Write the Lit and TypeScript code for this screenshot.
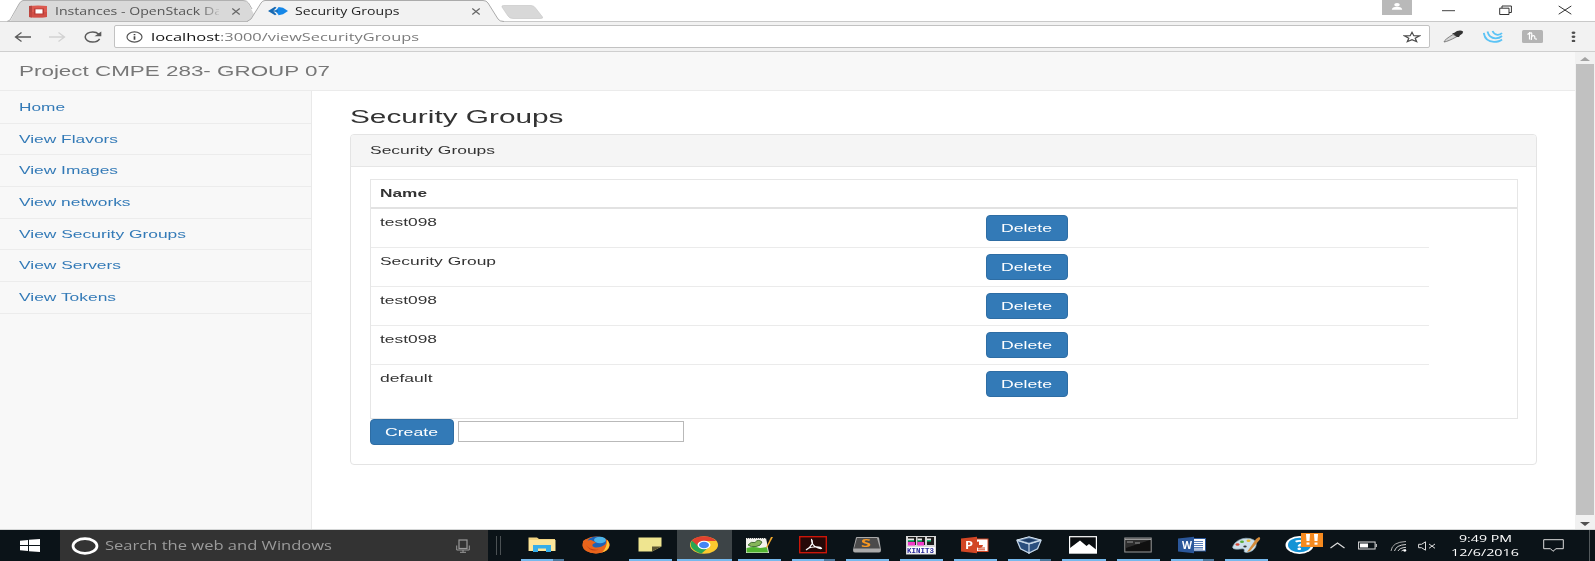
import { LitElement, html, css, svg } from "lit";
import { customElement, property } from "lit/decorators.js";

/* Single line of text stretched horizontally to a fixed measure. */
@customElement("wide-text")
class WideText extends LitElement {
  @property({ type: Number }) w = 100;
  static styles = css`
    :host { display: inline-block; white-space: nowrap; flex: none; text-align: left; }
    .run { display: inline-block; transform-origin: 0 50%; }
  `;
  render() {
    return html`<span class="run"><slot></slot></span>`;
  }
  updated() {
    const run = this.renderRoot.querySelector(".run") as HTMLElement;
    this.style.width = this.w + "px";
    run.style.transform = "none";
    const natural = run.getBoundingClientRect().width;
    if (natural) run.style.transform = `scaleX(${this.w / natural})`;
  }
}

const icon = (cls: string, w: number, h: number, body: unknown) =>
  html`<svg class=${cls} width=${w} height=${h} viewBox="0 0 ${w} ${h}" fill="none">${body}</svg>`;

@customElement("browser-chrome")
class BrowserChrome extends LitElement {
  static styles = css`
    :host { display: block; font-family: "Open Sans", "Noto Sans", sans-serif; color: #222; }
    svg { display: block; flex: none; }
    .strip { display: flex; height: 22px; padding-left: 7px; background: #fff; box-shadow: inset 0 -1px #c9c9c9; align-items: flex-start; }
    .tab { display: grid; height: 22px; flex: none; }
    .tab > * { grid-area: 1 / 1; }
    .first { width: 257px; }
    .second { width: 257px; margin-left: -17px; position: relative; }
    .body { display: flex; align-items: center; height: 22px; font-size: 10.6px; line-height: 22px; }
    .first .body { padding-left: 21px; }
    .second .body { padding-left: 21px; }
    .first .label { margin-left: 7px; width: 164px; color: #555; display: flex;
      -webkit-mask-image: linear-gradient(90deg, #000 145px, transparent 168px); mask-image: linear-gradient(90deg, #000 145px, transparent 168px); }
    .second .label { margin-left: 7px; width: 176px; display: flex; }
    .first .x { margin-left: 12px; }
    .new { margin: 5px 0 0 -3px; }
    .window { display: flex; margin-left: 838px; }
    .min { margin: 10px 0 0 30px; }
    .max { margin: 5px 0 0 44px; }
    .cls { margin: 5px 0 0 46px; }
    .bar { display: flex; align-items: center; height: 29px; background: #f2f2f2; padding-left: 14px; }
    .fwd { margin-left: 18px; }
    .reload { margin-left: 18px; }
    .omni { display: flex; align-items: center; box-sizing: border-box; width: 1316px; height: 23px; margin-left: 12px; padding-left: 11px;
      background: #fff; border: 1px solid #c2c2c2; border-radius: 2px; font-size: 11.4px; line-height: 20px; }
    .host { margin-left: 8px; color: #111; }
    .path { color: #7b7b7b; }
    .star { margin-left: auto; margin-right: 8px; }
    .pick { margin-left: 13px; }
    .swirl { margin-left: 19px; }
    .honey { margin-left: 19px; }
    .dots { margin-left: 28px; }
    .edge { height: 1px; background: #cfcfcf; }
  `;
  render() {
    const close = icon("x", 10, 9, svg`<path d="M1.300 1.500L8.700 7.500M8.700 1.500L1.300 7.500" stroke="#666" stroke-width="1.200"/>`);
    return html`
      <div class="strip">
        <div class="tab first">
          ${icon("", 257, 22, svg`<path d="M0 22L4 20L12 4Q13.500 1 16 .5H236Q240 .5 241.500 4L249 18L240 22Z" fill="#d9d9d9"/><path d="M0 21.500L3 20L12 4Q13.500 1 16 .5H236Q240 .5 241.500 3L245 9" stroke="#b0b0b0"/><path d="M0 21.500H242" stroke="#b9b9b9"/>`)}
          <div class="body">
            ${icon("", 20, 13, svg`<path d="M1 1Q10 0 19 1V12Q10 13 1 12Z" fill="#dc5a50"/><path d="M1 1V12L4 12.500V.7Z" fill="#b5453f"/><path d="M1 7H19V12Q10 13 1 12Z" fill="#c94640" opacity=".6"/><rect x="6" y="3.500" width="10" height="6" fill="#b93a35"/><rect x="7.500" y="4.300" width="7" height="4.200" fill="#fff"/>`)}
            <span class="label"><wide-text .w=${167}>Instances - OpenStack Da</wide-text></span>
            ${close}
          </div>
        </div>
        <div class="tab second">
          ${icon("", 257, 22, svg`<path d="M0 22L4 19L14 3Q15.500 .5 18 .5H236Q239.500 .5 241 3L251 19L256 22Z" fill="#f2f2f2"/><path d="M0 21.500L4 19L14 3Q15.500 .5 18 .5H236Q239.500 .5 241 3L251 19Q252.500 21.500 257 21.500" stroke="#ababab"/>`)}
          <div class="body">
            ${icon("", 20, 10, svg`<path d="M0 5L7 .8L9 2L5 5L9 8L7 9.200Z" fill="#1769b3"/><path d="M7 5L10.500 1L15 1.800L20 5L15 8.200L10.500 9.200Z" fill="#1587e8"/><path d="M3 5H8" stroke="#1769b3" stroke-width="1.200"/><path d="M10 1L6 5L10 9" stroke="#f2f2f2" stroke-width="1.100"/><path d="M5 5H10" stroke="#1769b3" stroke-width="1.200"/>`)}
            <span class="label"><wide-text .w=${104.5}>Security Groups</wide-text></span>
            ${close}
          </div>
        </div>
        ${icon("new", 43, 14, svg`<path d="M2.500 .5H30Q33 .5 34.500 3L41.500 12Q42.500 13.500 39 13.500H12Q8.500 13.500 7 11L1 2Q.5 .5 2.500 .5Z" fill="#d8d8d8" stroke="#c9c9c9" stroke-width=".7"/>`)}
        <div class="window">
          ${icon("", 30, 15, svg`<rect width="30" height="15" fill="#b9b9b9"/><ellipse cx="15" cy="4.700" rx="2.800" ry="1.700" fill="#fff"/><path d="M9.800 9.700Q10 6.700 15 6.700T20.200 9.700Z" fill="#fff"/>`)}
          ${icon("min", 13, 2, svg`<path d="M0 .7H13" stroke="#444"/>`)}
          ${icon("max", 13, 10, svg`<path d="M.7 3.200H10V9.500H.7ZM3 3V1H12.400V7.500H10" stroke="#333"/>`)}
          ${icon("cls", 14, 10, svg`<path d="M.7 1L13.300 9.200M13.300 1L.7 9.200" stroke="#333"/>`)}
        </div>
      </div>
      <div class="bar">
        ${icon("", 17, 12, svg`<path d="M1.500 6H17M7.500 1.500L1.500 6L7.500 10.500" stroke="#5a5a5a" stroke-width="1.300"/>`)}
        ${icon("fwd", 17, 12, svg`<path d="M0 6H15.500M9.500 1.500L15.500 6L9.500 10.500" stroke="#d2d2d2" stroke-width="1.300"/>`)}
        ${icon("reload", 18, 12, svg`<path d="M14.800 3.200Q12.500 1 8.800 1C4.500 1 1.200 3.200 1.200 6S4.500 11 8.800 11C12 11 14.500 9.700 15.600 7.800" stroke="#5a5a5a" stroke-width="1.500"/><path d="M17.300 .5V5.200H10.500Z" fill="#5a5a5a"/>`)}
        <div class="omni">
          ${icon("", 17, 12, svg`<ellipse cx="8.500" cy="6" rx="7.500" ry="5.100" stroke="#555" stroke-width="1.200"/><path d="M8.500 5.200V8.700M8.500 3.100V4.300" stroke="#444" stroke-width="1.700"/>`)}
          <wide-text class="host" .w=${69}>localhost</wide-text><wide-text class="path" .w=${199}>:3000/viewSecurityGroups</wide-text>
          ${icon("star", 18, 12, svg`<path d="M9 1.300L10.800 4.700L16.500 4.900L12.200 7.200L13.700 10.700L9 8.700L4.300 10.700L5.800 7.200L1.500 4.900L7.200 4.700Z" stroke="#4a4a4a" stroke-width="1.200"/>`)}
        </div>
        ${icon("pick", 21, 13, svg`<path d="M1 12Q1.500 9.500 10 4.500L14 6.500Q5 11.500 1 12Z" fill="#d5d5d5" stroke="#777" stroke-width=".9"/><path d="M9 3L11 3L14 1Q18 -.3 20 1.500Q20.500 3.500 17 5.200L16 7L14 7Z" fill="#333"/>`)}
        ${icon("swirl", 20, 13, svg`<path d="M.8 3Q2 11.500 11 11.800Q16.500 11.800 19 9.500M4.500 1.500Q6 8 12.500 8.300Q16.500 8.300 19 6M9.500 1Q11 4.500 14.500 4.800Q17.500 4.900 19 3" stroke="#5bc3f5" stroke-width="1.800"/>`)}
        ${icon("honey", 21, 13, svg`<rect width="21" height="13" rx="1.500" fill="#b4b4b4"/><path d="M5.500 4.500L7.500 3V9.500M7.500 3.500Q10 1.800 9.800 4.500L9.300 10M9.500 6.500Q13 4.500 12.800 7.500Q12.500 9.500 15 9" stroke="#fff" stroke-width="1.200"/>`)}
        ${icon("dots", 5, 12, svg`<ellipse cx="2.500" cy="1.700" rx="1.900" ry="1.200" fill="#505050"/><ellipse cx="2.500" cy="5.800" rx="1.900" ry="1.200" fill="#505050"/><ellipse cx="2.500" cy="9.900" rx="1.900" ry="1.200" fill="#505050"/>`)}
      </div>
      <div class="edge"></div>
    `;
  }
}

@customElement("site-page")
class SitePage extends LitElement {
  links: [string, number][] = [["Home", 46], ["View Flavors", 99], ["View Images", 99], ["View networks", 111.5], ["View Security Groups", 167], ["View Servers", 102], ["View Tokens", 97]];
  groups: [string, number][] = [["test098", 57], ["Security Group", 116], ["test098", 57], ["test098", 57], ["default", 52.5]];
  static styles = css`
    :host { display: flex; height: 478px; background: #fff; font-family: "Liberation Sans", Arial, sans-serif; font-size: 11px; color: #333; }
    * { box-sizing: border-box; }
    .page { width: 1575px; display: flex; flex-direction: column; }
    .nav { height: 39px; flex: none; background: #f8f8f8; border-bottom: 1px solid #ebebeb; padding-left: 19px; line-height: 39px; font-size: 14.300px; color: #777; }
    .cols { display: flex; flex: 1; min-height: 0; }
    .side { width: 312px; background: #f8f8f8; border-right: 1px solid #e9e9e9; padding-top: 1px; }
    .link { height: 31.700px; border-bottom: 1px solid #ececec; padding-left: 19px; line-height: 31.500px; color: #337ab7; }
    .main { padding: 13px 0 0 38px; }
    .title { height: 30px; font-size: 18.700px; line-height: 25px; }
    .panel { width: 1187px; height: 331px; border: 1px solid #e4e4e4; border-radius: 4px; }
    .head { height: 31.500px; background: #f5f5f5; border-bottom: 1px solid #e6e6e6; border-radius: 3px 3px 0 0; padding-left: 18.500px; line-height: 30px; }
    .inner { padding: 12px 18.500px 0 18.500px; }
    .box { height: 240px; border: 1px solid #e6e6e6; }
    .th { height: 29.500px; border-bottom: 2px solid #e2e2e2; padding-left: 9.500px; font-weight: bold; line-height: 27px; }
    .row { display: flex; width: 1058px; height: 39px; border-bottom: 1px solid #ebebeb; padding: 6px 0 0 9.500px; }
    .row:last-child { border-bottom: 0; }
    .name { width: 605.500px; line-height: 15px; }
    .btn { display: flex; justify-content: center; width: 82px; height: 26px; border: 1px solid #2e6da4; border-radius: 4px; background: #337ab7; color: #fff; line-height: 24px; }
    .form { display: flex; gap: 4px; }
    .create { width: 84px; }
    .field { width: 226px; height: 21px; margin-top: 2px; border: 1px solid #b9b9b9; background: #fff; }
    .scroll { width: 20px; background: #f1f1f1; display: flex; flex-direction: column; align-items: center; padding: 5px 1px 0 0; }
    .thumb { width: 18px; height: 451px; margin: 3px 0 7px; background: #c1c1c1; }
    svg { display: block; flex: none; }
  `;
  render() {
    return html`
      <div class="page">
        <div class="nav"><wide-text .w=${311}>Project CMPE 283- GROUP 07</wide-text></div>
        <div class="cols">
          <div class="side">
            ${this.links.map(([t, w]) => html`<div class="link"><wide-text .w=${w}>${t}</wide-text></div>`)}
          </div>
          <div class="main">
            <div class="title"><wide-text .w=${213.5}>Security Groups</wide-text></div>
            <div class="panel">
              <div class="head"><wide-text .w=${125}>Security Groups</wide-text></div>
              <div class="inner">
                <div class="box">
                  <div class="th"><wide-text .w=${47}>Name</wide-text></div>
                  ${this.groups.map(([t, w]) => html`
                    <div class="row">
                      <div class="name"><wide-text .w=${w}>${t}</wide-text></div>
                      <div class="btn"><wide-text .w=${51}>Delete</wide-text></div>
                    </div>`)}
                </div>
                <div class="form">
                  <div class="btn create"><wide-text .w=${53}>Create</wide-text></div>
                  <div class="field"></div>
                </div>
              </div>
            </div>
          </div>
        </div>
      </div>
      <div class="scroll">
        ${icon("", 10, 4, svg`<path d="M0 4L5 0L10 4Z" fill="#a3a3a3"/>`)}
        <div class="thumb"></div>
        ${icon("", 10, 4, svg`<path d="M0 0L5 4L10 0Z" fill="#505050"/>`)}
      </div>
    `;
  }
}

const apps: { mark: string; body: unknown }[] = [
  { mark: "split", body: svg`<path d="M.5 1.500H9L11 3H27V15H.5Z" fill="#f3d583"/><path d="M1 4H27.500V15H1Z" fill="#fce69b"/><path d="M5 9H23V16H18V12.500H10V16H5Z" fill="#35aeea"/>` },
  { mark: "none", body: svg`<ellipse cx="14" cy="9" rx="13.500" ry="8.500" fill="#e8681d"/><ellipse cx="15" cy="7" rx="10.500" ry="6.500" fill="#1f62b5"/><ellipse cx="18" cy="4" rx="6" ry="3.200" fill="#4cb4e8"/><path d="M1 5L4 3L6 4.500Q9 3.500 11 5L14 6.500L11 8Q9 10 13 11.500Q19 12 23 8.500Q25 6 23.500 3Q28 6 27.500 9.500Q26 17 14 17.500Q2 17 .7 10Z" fill="#e9641b"/><path d="M25 4Q28 7 27 11Q25 15 20 16.500Q25 12 25 4Z" fill="#ffc83a"/><path d="M4 9Q8 14.500 17 13.500Q9 17 4 9Z" fill="#c13d17"/>` },
  { mark: "line", body: svg`<path d="M2.500 1.500H25.500V10.500L16 15.500H2.500Z" fill="#efe590"/><path d="M16 15.500V10.500H25.500Z" fill="#5c5632"/>` },
  { mark: "line active", body: svg`<ellipse cx="14" cy="9" rx="14" ry="8.700" fill="#fbc92f"/><path d="M14 9L2 4.500Q-3 13 11.500 17.600L19 11Z" fill="#2aa652"/><path d="M1.800 4.600Q6 .3 14 .3T26.300 5H14L8 10Z" fill="#e2412f"/><ellipse cx="14" cy="9" rx="6.500" ry="4.200" fill="#fff"/><ellipse cx="14" cy="9" rx="5" ry="3.200" fill="#4285f4"/>` },
  { mark: "line", body: svg`<path d="M1 2H21L24 17H1Z" fill="#f2f2ec"/><path d="M1.500 12Q9 10 15 12L22 11L23 16.500H1.500Z" fill="#52b531"/><path d="M3 9Q6 5 10 6.500Q13 2.500 17 6Q16 10 11 10.500Q6 11.500 3 9Z" fill="#87b55a" stroke="#315c24" stroke-width=".8"/><path d="M2 2.500H21" stroke="#777" stroke-dasharray="1 1"/><path d="M28 1L22 12L21 11.500L26 1Z" fill="#f0a92d"/>` },
  { mark: "split", body: svg`<rect x=".7" y=".7" width="26.600" height="16" fill="#260807" stroke="#cc1609" stroke-width="1.400"/><path d="M7 14Q11 12 13.500 7Q13.500 4 12.500 3.500Q12.500 8 16 10.500Q20 13 22.500 12.500Q22 10.500 15 11Q9 11.500 7 14Z" stroke="#fff" stroke-width="1.100"/>` },
  { mark: "line", body: svg`<path d="M3 1.500Q3 1 4 1H24L26 1.500L28 14Q28 16.500 26 16.500H2Q0 16.500 0 14Z" fill="#aaa"/><path d="M4 2H24L27 12.500H1Z" fill="#4b4b4b"/>` },
  { mark: "line", body: svg`<rect x="-1" y="0" width="30" height="18.500" fill="#d9d9d9"/><path d="M1 1H9V9H1ZM10.500 1H18V9H10.500ZM20 1H27V9H20Z" fill="#1c1c1c"/><path d="M1 2.500H7V4H1ZM10.500 2.500H15V4H10.500ZM20 2.500H24V4H20Z" fill="#e8e8e8"/><path d="M1 4H7V5.500H1ZM10.500 4H15V5.500H10.500ZM20 4H24V5.500H20Z" fill="#27bf78"/><path d="M1 6H8V9.500H1ZM10.500 6H17V9.500H10.500Z" fill="#f03ac9"/><rect x="0" y="11" width="28" height="6.500" fill="#fff"/>` },
  { mark: "line", body: svg`<rect x="14" y="3" width="13" height="12.500" fill="#fff" stroke="#d24625"/><path d="M18 5.500V9H22A4 3.200 0 1 1 18 5.500" fill="#d24625"/><path d="M17 12H24M17 13.800H24" stroke="#d24625"/><path d="M0 2.500L16 .8V17.300L0 15.500Z" fill="#d24625"/>` },
  { mark: "split", body: svg`<path d="M1.500 4L14 .5L26.500 4L23 13L14 17.500L5 13Z" fill="#2b4f7e"/><path d="M2 4L14 .8L26 4L14 8Z" fill="#6f8fb3" stroke="#dde8f2"/><path d="M6 4.200L14 2.200L22 4.200L14 6.500Z" fill="#1e3c66"/><path d="M2 4.500L14 8V17L5.500 12.800ZM26 4.500L14 8V17L22.500 12.800Z" stroke="#c6d6e6" stroke-width="1.200"/>` },
  { mark: "line", body: svg`<rect x=".6" y=".7" width="26.800" height="16.400" fill="#090d10" stroke="#fff" stroke-width="1.200"/><path d="M1 12L11 4.500L17.500 10L20 8L27 13.500V17H1Z" fill="#fff"/>` },
  { mark: "line", body: svg`<rect x=".8" y="2" width="26.400" height="14" fill="#101010" stroke="#9a9a9a"/><path d="M1 3.300H27" stroke="#bdbdbd"/><path d="M3 6H9M11 7H16" stroke="#aaa" stroke-width=".8"/><path d="M1.300 4H26L2 12Z" fill="#fff" opacity=".12"/>` },
  { mark: "split", body: svg`<rect x="14" y="2.500" width="13.500" height="12.500" fill="#fff" stroke="#2b579a"/><path d="M16 5.500H25M16 7.500H25M16 9.500H25M16 11.500H25M16 13H25" stroke="#4770b3" stroke-width=".9"/><path d="M0 2.500L16 .8V17.300L0 15.500Z" fill="#2b579a"/>` },
  { mark: "line", body: svg`<path d="M3 7Q9 1 18 2.500Q26 4.500 24 10Q22 15.500 15 16.500Q11 16.500 12.500 14Q12 12 8 13Q-1 14 1 10Z" fill="#cde0ea" stroke="#8ea9b8" stroke-width=".7"/><ellipse cx="5.500" cy="8.500" rx="2" ry="1.300" fill="#d64635"/><ellipse cx="10" cy="5.800" rx="2" ry="1.300" fill="#57ad3b"/><ellipse cx="16.500" cy="4.800" rx="2" ry="1.300" fill="#e5b82e"/><ellipse cx="13" cy="10.500" rx="1.700" ry="1.100" fill="#333"/><path d="M15 16L24 3L27 1Q29 2 27.500 4L18 15Z" fill="#d48b3a"/>` },
  { mark: "none help", body: svg`<ellipse cx="13.500" cy="9" rx="14" ry="9" fill="#fff"/><ellipse cx="13.500" cy="9" rx="11.500" ry="7.300" fill="#1493d6"/>` },
];

@customElement("task-bar")
class TaskBar extends LitElement {
  static styles = css`
    :host { display: flex; height: 31px; background: #0b1318; color: #fff; font-family: "Open Sans", "Noto Sans", sans-serif; border-top: 1px solid #d4d6d6; }
    svg { display: block; flex: none; overflow: visible; }
    .start { width: 60px; display: grid; place-items: center; }
    .search { width: 428px; background: #333; display: flex; align-items: center; padding-left: 10.500px; box-sizing: border-box; }
    .hint { margin-left: 6px; font-size: 12px; line-height: 30px; color: #9b9b9b; margin-top: 1px; }
    .mic { margin-left: 124px; }
    .grip { width: 3px; height: 19px; margin: 6px 14px 0 8px; border-left: 1px solid #4b5154; border-right: 1px solid #4b5154; }
    .app { width: 54.150px; position: relative; display: flex; justify-content: center; padding-top: 6px; box-sizing: border-box; }
    .line::after, .split::after { content: ""; position: absolute; left: 6px; right: 5px; bottom: 0; height: 2px; background: #76b9ed; }
    .split::after { background: linear-gradient(90deg, #76b9ed 32px, #4a779b 32px); }
    .active { background: #3d4447; }
    .active::after { left: 0; right: 0; }
    .glyph { position: absolute; left: 17px; top: 6px; font: bold 10.500px/18px "Open Sans", sans-serif; }
    .ess { left: 21px; top: 4px; color: #f89820; font-size: 11px; }
    .kin { left: 13.500px; top: 17.500px; color: #2a2a9c; font: bold 7px/7px "Liberation Mono", monospace; }
    .ask { left: 22px; font-size: 14px; }
    .alert { position: absolute; left: 28px; top: 3px; width: 22px; height: 14px; background: #f68a1f; display: flex; justify-content: center; gap: 4px; padding-top: 1px; box-sizing: border-box; }
    .tray { display: flex; align-items: center; height: 31px; margin-left: 3px; }
    .bat { margin-left: 13px; }
    .wifi { margin-left: 13px; }
    .snd { margin-left: 11px; }
    .clock { width: 68px; margin-left: 15px; display: flex; flex-direction: column; align-items: center; font-size: 9.800px; line-height: 14.500px; padding-top: 1px; }
    .note { margin-left: 24px; }
    .desk { width: 1px; height: 31px; background: #53595c; margin-left: 25px; }
  `;
  render() {
    return html`
      <div class="start">${icon("", 20, 13, svg`<path d="M0 1.700L8 .9V6H0ZM9 .8L20 0V6H9ZM0 7H8V12.100L0 11.300ZM9 7H20V13L9 12.200Z" fill="#fff"/>`)}</div>
      <div class="search">
        ${icon("", 28, 18, svg`<ellipse cx="14" cy="9" rx="12" ry="7.300" stroke="#fff" stroke-width="2.700"/>`)}
        <wide-text class="hint" .w=${227}>Search the web and Windows</wide-text>
        ${icon("mic", 14, 14, svg`<rect x="3" y="1" width="8" height="8.500" stroke="#999" stroke-width="1.200"/><path d="M.7 6.500V11H13.300V6.500M7 11V13.300M4 13.300H10" stroke="#999"/>`)}
      </div>
      <div class="grip"></div>
      ${apps.map((a, i) => html`
        <div class="app ${a.mark}">
          ${icon("", 28, 18, a.body)}
          ${i === 6 ? html`<span class="glyph ess"><wide-text .w=${10}>S</wide-text></span>` : ""}
          ${i === 7 ? html`<span class="glyph kin"><wide-text .w=${27}>KINIT3</wide-text></span>` : ""}
          ${i === 8 ? html`<span class="glyph"><wide-text .w=${8}>P</wide-text></span>` : ""}
          ${i === 12 ? html`<span class="glyph"><wide-text .w=${10}>W</wide-text></span>` : ""}
          ${i === 14 ? html`<span class="glyph ask"><wide-text .w=${10}>?</wide-text></span><span class="alert">${[0, 1].map(() => icon("", 4, 11, svg`<path d="M0 0H4L3.500 7H.5Z" fill="#fff"/><rect x=".5" y="8.500" width="3" height="2.200" fill="#fff"/>`))}</span>` : ""}
        </div>`)}
      <div class="tray">
        ${icon("", 15, 7, svg`<path d="M.5 6L7.500 1L14.500 6" stroke="#ddd" stroke-width="1.200"/>`)}
        ${icon("bat", 19, 9, svg`<rect x=".6" y="1" width="16.500" height="7" stroke="#ddd"/><rect x="2" y="2.500" width="8" height="4" fill="#fff"/><path d="M18.300 3V6" stroke="#ddd"/>`)}
        ${icon("wifi", 17, 12, svg`<path d="M1 11Q2 2 16 1.500" stroke="#aaa"/><path d="M4.500 11Q6 5 16 4.500M8 11Q9.500 7.800 16 7.300M11.500 11Q12.500 9.700 16 9.700" stroke="#d0d0d0"/><ellipse cx="14.800" cy="10.600" rx="1.600" ry="1.100" fill="#fff"/>`)}
        ${icon("snd", 18, 10, svg`<path d="M.6 3.300H3.500L7.500 .8V9.200L3.500 6.700H.6Z" stroke="#ddd"/><path d="M11 3L17 7.300M17 3L11 7.300" stroke="#ddd"/>`)}
        <div class="clock"><wide-text .w=${53}>9:49 PM</wide-text><wide-text .w=${68}>12/6/2016</wide-text></div>
        ${icon("note", 21, 13, svg`<path d="M.7 .7H20.300V9.700H13L10 12.300L7.500 9.700H.7Z" stroke="#ddd"/>`)}
        <div class="desk"></div>
      </div>
    `;
  }
}

@customElement("app-root")
class AppRoot extends LitElement {
  static styles = css`
    :host { display: flex; flex-direction: column; width: 1595px; height: 561px; overflow: hidden; background: #fff; }
    browser-chrome { height: 52px; flex: none; }
    site-page { flex: none; height: 477px; }
    task-bar { flex: none; }
  `;
  render() {
    return html`<browser-chrome></browser-chrome><site-page></site-page><task-bar></task-bar>`;
  }
}
